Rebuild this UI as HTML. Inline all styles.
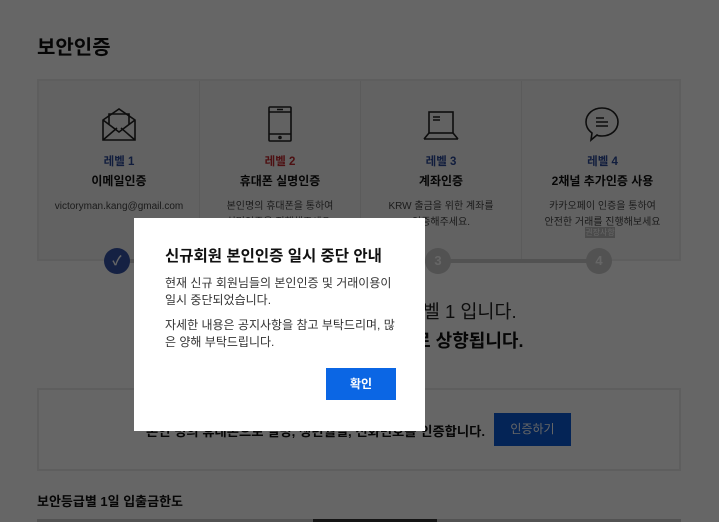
<!DOCTYPE html>
<html><head><meta charset="utf-8"><style>
*{margin:0;padding:0;box-sizing:border-box}
body{width:719px;height:522px;overflow:hidden;background:#fff;font-family:"Liberation Sans","Noto Sans CJK KR",sans-serif;position:relative;color:#222}
.a{position:absolute}
h1{position:absolute;left:37px;top:31px;font-size:20px;font-weight:bold;color:#111}
.card{left:37px;top:79px;width:644px;height:182px;border:2px solid #ececec;background:#f6f6f6}
.col{position:absolute;top:0;width:161px;height:178px;text-align:center;border-right:1px solid #e4e4e4}
.col svg{position:absolute;left:62px;top:25px}
.lv{position:absolute;top:72px;width:100%;font-size:11.5px;font-weight:bold;color:#2b4a9a}
.nm{position:absolute;top:91px;width:100%;font-size:12px;font-weight:bold;color:#111}
.ds{position:absolute;top:118px;width:100%;font-size:10px;color:#444;line-height:16px}
.circ{position:absolute;width:26px;height:26px;border-radius:50%;background:#ccc;color:#fff;font-size:13px;font-weight:bold;text-align:center;line-height:26px}
.ov{left:0;top:0;width:719px;height:522px;background:rgba(0,0,0,.6)}
.modal{left:134px;top:218px;width:291px;height:213px;background:#fff}
</style></head><body>
<h1>보안인증</h1>
<div class="a card">
 <div class="col" style="left:0"><svg width="36" height="36" viewBox="0 0 36 36" fill="none" stroke="#222" stroke-width="1.6"><path d="M2 14 L18 3 L34 14 V34 H2 Z"/><path d="M2 34 L16 22 M34 34 L20 22 M2 14 L18 26 L34 14"/><path d="M8 18 V8 H28 V18"/></svg><div class="lv">레벨 1</div><div class="nm">이메일인증</div><div class="ds">victoryman.kang@gmail.com</div></div>
 <div class="col" style="left:161px"><svg width="36" height="36" viewBox="0 0 36 36" fill="none" stroke="#222" stroke-width="1.6"><rect x="7" y="1" width="22" height="34" rx="1"/><path d="M7 6 H29 M7 28 H29 M15 3.5 H21"/><circle cx="18" cy="31.5" r="1"/></svg><div class="lv" style="color:#c0282d">레벨 2</div><div class="nm">휴대폰 실명인증</div><div class="ds">본인명의 휴대폰을 통하여<br>실명인증을 진행해주세요.</div></div>
 <div class="col" style="left:322px"><svg width="36" height="36" viewBox="0 0 36 36" fill="none" stroke="#222" stroke-width="1.6"><rect x="6" y="6" width="24" height="21"/><path d="M10 11 H17 M10 14 H17 M1 33 L6 27 M35 33 L30 27 M1 33 H35"/></svg><div class="lv">레벨 3</div><div class="nm">계좌인증</div><div class="ds">KRW 출금을 위한 계좌를<br>인증해주세요.</div></div>
 <div class="col" style="left:483px;border:0"><svg width="36" height="36" viewBox="0 0 36 36" fill="none" stroke="#222" stroke-width="1.6"><path d="M18 2 C27 2 34 8 34 16 C34 24 27 30 18 30 C16 30 14 30 13 29 L7 34 L8 27 C4 24 2 20 2 16 C2 8 9 2 18 2 Z"/><path d="M12 12 H20 M12 16 H24 M12 20 H24"/></svg><div class="lv">레벨 4</div><div class="nm">2채널 추가인증 사용</div><div class="ds">카카오페이 인증을 통하여<br>안전한 거래를 진행해보세요</div><div class="a" style="left:63px;top:146px;width:30px;height:11px;background:#bbb;color:#fff;font-size:8px;line-height:11px">권장사항</div></div>
</div>
<div class="a" style="left:117px;top:259px;width:482px;height:4px;background:#ccc"></div>
<div class="circ" style="left:104px;top:248px;background:#3553a8">✓</div>
<div class="circ" style="left:425px;top:248px">3</div>
<div class="circ" style="left:586px;top:248px">4</div>
<div class="a" style="left:0;width:719px;top:298px;padding-left:74px;text-align:center;font-size:18.5px;color:#222">현재 보안등급은 레벨 1 입니다.</div>
<div class="a" style="left:0;width:719px;top:327px;padding-left:28px;text-align:center;font-size:18px;font-weight:bold;color:#111">인증을 완료하시면 레벨 2로 상향됩니다.</div>
<div class="a" style="left:37px;top:388px;width:644px;height:83px;border:2px solid #ececec;background:#fff"></div>
<div class="a" style="left:146px;top:421px;font-size:13.3px;font-weight:bold;color:#111">본인 명의 휴대폰으로 실명, 생년월일, 전화번호를 인증합니다.</div>
<div class="a" style="left:494px;top:413px;width:77px;height:33px;background:#0a5ad6;color:#fff;font-size:12px;text-align:center;line-height:33px">인증하기</div>
<div class="a" style="left:37px;top:491px;font-size:13px;font-weight:bold;color:#111">보안등급별 1일 입출금한도</div>
<div class="a" style="left:37px;top:519px;width:644px;height:3px;background:#ccc"></div>
<div class="a" style="left:313px;top:519px;width:124px;height:3px;background:#333"></div>
<div class="a ov"></div>
<div class="a modal">
 <div class="a" style="left:31px;top:26px;font-size:15.5px;font-weight:bold;color:#111">신규회원 본인인증 일시 중단 안내</div>
 <div class="a" style="left:31px;top:57px;width:234px;font-size:12px;line-height:16.5px;color:#333">현재 신규 회원님들의 본인인증 및 거래이용이<br>일시 중단되었습니다.</div>
 <div class="a" style="left:31px;top:99px;width:234px;font-size:12px;line-height:16.5px;color:#333">자세한 내용은 공지사항을 참고 부탁드리며, 많<br>은 양해 부탁드립니다.</div>
 <div class="a" style="left:192px;top:150px;width:70px;height:32px;background:#0b66e4;color:#fff;font-size:12px;font-weight:bold;text-align:center;line-height:32px">확인</div>
</div>
</body></html>
